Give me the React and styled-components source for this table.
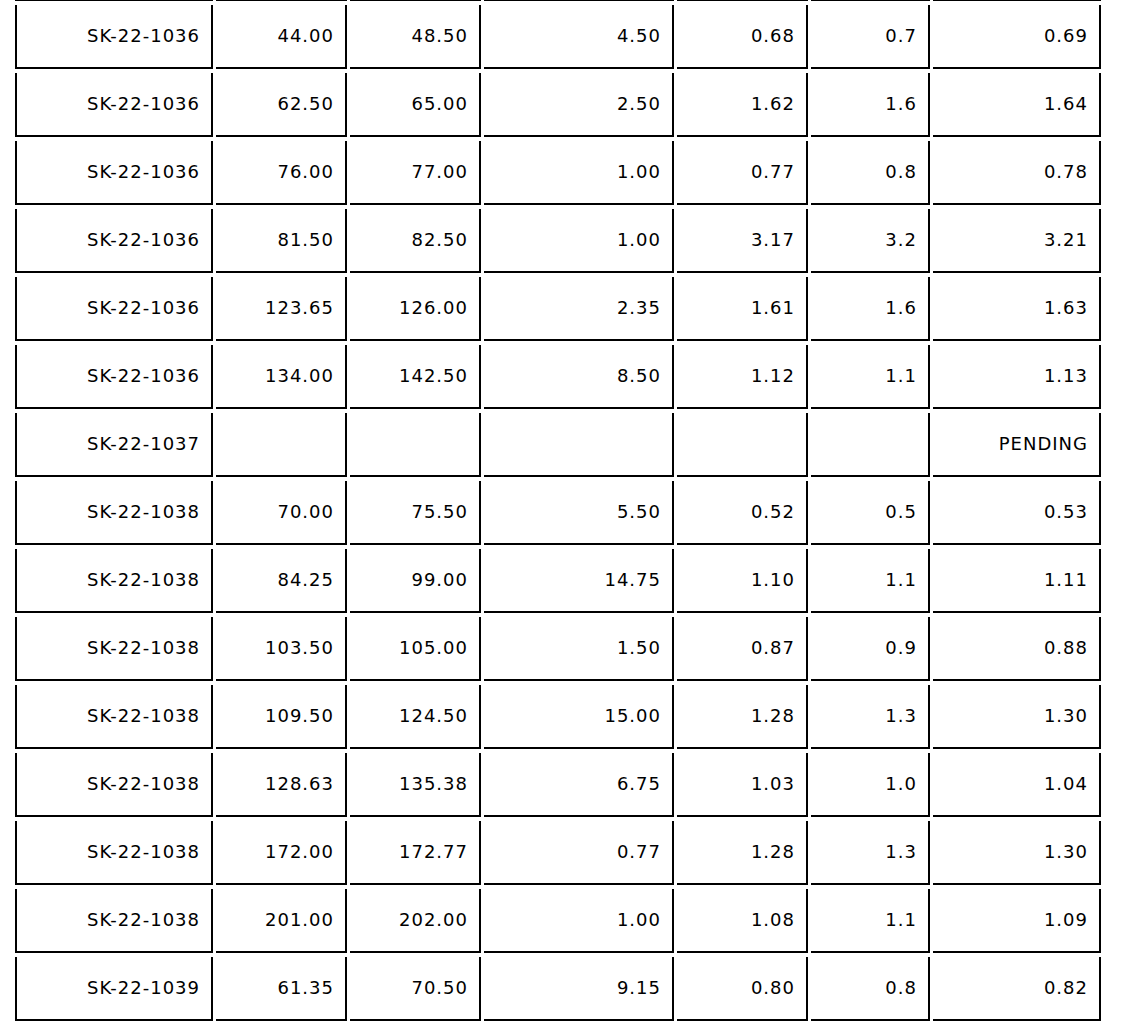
import React from "react";
import styled, { createGlobalStyle } from "styled-components";

const GlobalStyle = createGlobalStyle`
  html, body {
    margin: 0;
    padding: 0;
    background: #ffffff;
  }
  body {
    font-family: "DejaVu Sans", Verdana, sans-serif;
    color: #000000;
    overflow: hidden;
  }
`;

const COLUMNS = "198px 131px 131px 190px 131px 119px 168px";

const Grid = styled.div`
  display: grid;
  grid-template-columns: ${COLUMNS};
  column-gap: 3px;
  row-gap: 4px;
  padding-left: 15px;
`;

const EdgeCell = styled.div`
  box-sizing: border-box;
  height: 1px;
  border-top: 1px solid #000;
`;

const Cell = styled.div`
  box-sizing: border-box;
  height: 64px;
  padding: 0 11px 2px 0;
  border-right: 2px solid #000;
  border-bottom: 2px solid #000;
  border-left: ${(p) => (p.$first ? "2px solid #000" : "none")};
  display: flex;
  align-items: center;
  justify-content: flex-end;
  font-size: 18px;
  letter-spacing: 1px;
  white-space: nowrap;
  color: #000;
`;

const rows = [
  ["SK-22-1036", "44.00", "48.50", "4.50", "0.68", "0.7", "0.69"],
  ["SK-22-1036", "62.50", "65.00", "2.50", "1.62", "1.6", "1.64"],
  ["SK-22-1036", "76.00", "77.00", "1.00", "0.77", "0.8", "0.78"],
  ["SK-22-1036", "81.50", "82.50", "1.00", "3.17", "3.2", "3.21"],
  ["SK-22-1036", "123.65", "126.00", "2.35", "1.61", "1.6", "1.63"],
  ["SK-22-1036", "134.00", "142.50", "8.50", "1.12", "1.1", "1.13"],
  ["SK-22-1037", "", "", "", "", "", "PENDING"],
  ["SK-22-1038", "70.00", "75.50", "5.50", "0.52", "0.5", "0.53"],
  ["SK-22-1038", "84.25", "99.00", "14.75", "1.10", "1.1", "1.11"],
  ["SK-22-1038", "103.50", "105.00", "1.50", "0.87", "0.9", "0.88"],
  ["SK-22-1038", "109.50", "124.50", "15.00", "1.28", "1.3", "1.30"],
  ["SK-22-1038", "128.63", "135.38", "6.75", "1.03", "1.0", "1.04"],
  ["SK-22-1038", "172.00", "172.77", "0.77", "1.28", "1.3", "1.30"],
  ["SK-22-1038", "201.00", "202.00", "1.00", "1.08", "1.1", "1.09"],
  ["SK-22-1039", "61.35", "70.50", "9.15", "0.80", "0.8", "0.82"],
];

export default function App() {
  return (
    <>
      <GlobalStyle />
      <Grid>
        {Array.from({ length: 7 }).map((_, i) => (
          <EdgeCell key={`edge-${i}`} />
        ))}
        {rows.map((row, r) =>
          row.map((val, c) => (
            <Cell key={`${r}-${c}`} $first={c === 0}>
              {val}
            </Cell>
          ))
        )}
      </Grid>
    </>
  );
}
